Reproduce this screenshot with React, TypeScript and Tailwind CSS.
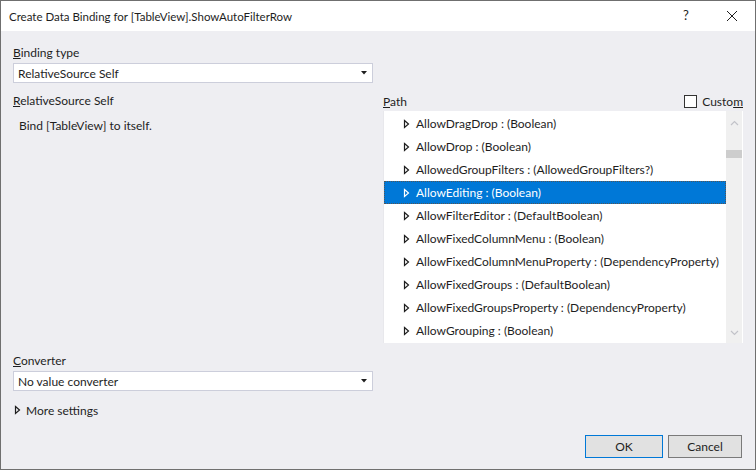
import React from 'react';

const font = { fontFamily: '"Segoe UI", Lato, "Noto Sans", sans-serif' };

const rows = [
  'AllowDragDrop : (Boolean)',
  'AllowDrop : (Boolean)',
  'AllowedGroupFilters : (AllowedGroupFilters?)',
  'AllowEditing : (Boolean)',
  'AllowFilterEditor : (DefaultBoolean)',
  'AllowFixedColumnMenu : (Boolean)',
  'AllowFixedColumnMenuProperty : (DependencyProperty)',
  'AllowFixedGroups : (DefaultBoolean)',
  'AllowFixedGroupsProperty : (DependencyProperty)',
  'AllowGrouping : (Boolean)',
];

function Expander({ light }: { light?: boolean }) {
  return (
    <svg width="7" height="10" viewBox="0 0 7 10" className="shrink-0">
      <path d="M1.5 1.5 L5.5 5 L1.5 8.5 Z" fill="none" stroke={light ? '#ffffff' : '#1e1e1e'} strokeWidth="1.2" strokeLinejoin="miter" />
    </svg>
  );
}

function Combo({ value }: { value: string }) {
  return (
    <div className="h-[20px] bg-white border border-[#cccedb] flex items-center pl-[4px] pr-[5px] text-[#1e1e1e]">
      <span className="flex-1 pt-[2px]">{value}</span>
      <svg width="6" height="4" viewBox="0 0 6 4">
        <path d="M0 0 H6 L3 3.5 Z" fill="#1e1e1e" />
      </svg>
    </div>
  );
}

export default function App() {
  return (
    <div className="w-[756px] h-[470px] border border-[#6f6f6f] bg-[#eeeef2] flex flex-col text-[12px] text-[#1e1e1e]" style={font}>
      <div className="h-[30px] bg-white flex items-center shrink-0">
        <span className="pl-[8px] pt-[2px] flex-1 text-[11.5px]">Create Data Binding for [TableView].ShowAutoFilterRow</span>
        <span className="w-[46px] text-center text-[13px]">?</span>
        <svg width="46" height="30" viewBox="0 0 46 30">
          <path d="M18 10 L28 20 M28 10 L18 20" stroke="#1e1e1e" strokeWidth="1" />
        </svg>
      </div>

      <div className="flex-1 flex flex-col pl-[12px] pr-[12px] pt-[12px] pb-[11px]">
        <div className="flex gap-[10px]">
          <div className="w-[360px] flex flex-col">
            <div className="h-[20px] flex items-center"><span className="-mt-[1px]"><u>B</u>inding type</span></div>
            <Combo value="RelativeSource Self" />
            <div className="h-[28px] pt-[7px] flex items-center"><span><u>R</u>elativeSource Self</span></div>
            <div className="pl-[6px] pt-[6px]">Bind [TableView] to itself.</div>
          </div>
          <div className="w-[360px] flex flex-col pt-[48px]">
            <div className="h-[20px] flex items-center pt-[1px]">
              <span className="flex-1"><u>P</u>ath</span>
              <span className="w-[13px] h-[13px] border border-[#333] bg-white mr-[5px] -mt-[1px]"></span>
              <span>Custo<u>m</u></span>
            </div>
            <div className="h-[232px] bg-white flex mt-[0px] border-l border-[#e8e8ec]">
              <div className="flex-1 flex flex-col pt-[1px]">
                {rows.map((r, i) => {
                  const sel = i === 3;
                  return (
                    <div
                      key={r}
                      className={
                        'h-[23px] flex items-center gap-[6px] pl-[19px] whitespace-nowrap ' +
                        (sel ? 'bg-[#0078d7] text-white outline-1 outline-dotted outline-[#555] -outline-offset-1' : '')
                      }
                    >
                      <Expander light={sel} />
                      <span className="pt-[1px]">{r}</span>
                    </div>
                  );
                })}
              </div>
              <div className="w-[17px] bg-[#f0f0f0] flex flex-col items-center border-r border-white">
                <svg width="9" height="6" viewBox="0 0 9 6" className="mt-[9px]">
                  <path d="M1 5 L4.5 1.5 L8 5" fill="none" stroke="#c2c3c9" strokeWidth="1.2" />
                </svg>
                <div className="w-full h-[8px] bg-[#cdcdcd] mt-[24px]"></div>
                <div className="flex-1"></div>
                <svg width="9" height="6" viewBox="0 0 9 6" className="mb-[7px]">
                  <path d="M1 1 L4.5 4.5 L8 1" fill="none" stroke="#c2c3c9" strokeWidth="1.2" />
                </svg>
              </div>
            </div>
          </div>
        </div>

        <div className="w-[360px] flex flex-col mt-[8px]">
          <div className="h-[20px] flex items-center"><span><u>C</u>onverter</span></div>
          <Combo value="No value converter" />
          <div className="h-[20px] mt-[9px] flex items-center gap-[5px] pl-[1px]">
            <Expander />
            <span className="pt-[1px]">More settings</span>
          </div>
        </div>

        <div className="flex-1"></div>
        <div className="flex justify-end gap-[5px] mr-[1px]">
          <button className="w-[78px] h-[23px] bg-[#e1e1e1] border border-[#0078d7] pt-[1px]">OK</button>
          <button className="w-[74px] h-[23px] bg-[#e1e1e1] border border-[#7a7a7a] pt-[1px]">Cancel</button>
        </div>
      </div>
    </div>
  );
}
